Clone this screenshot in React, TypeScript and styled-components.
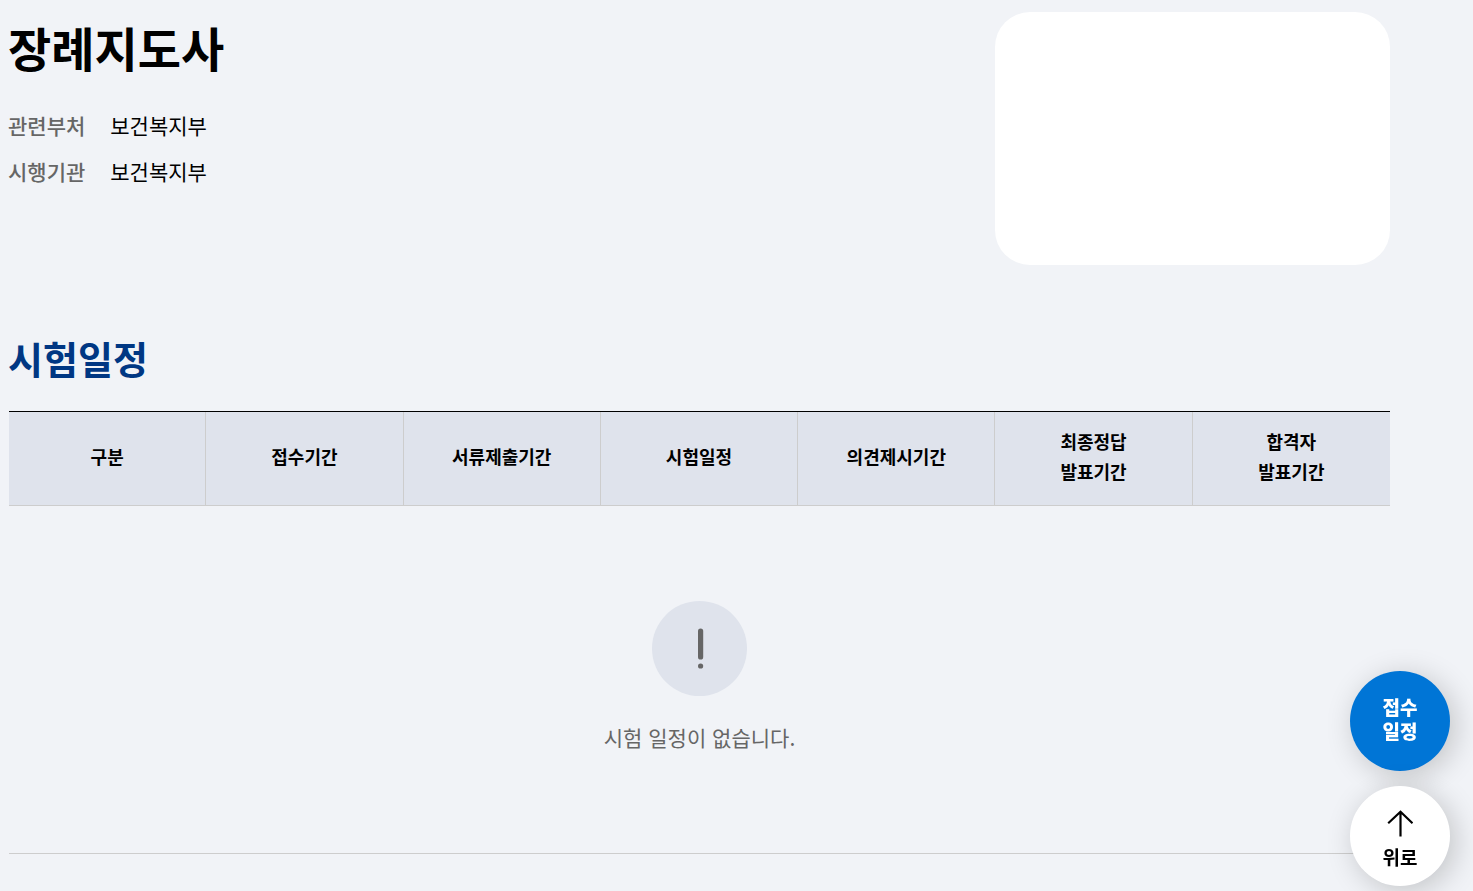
import styled, { createGlobalStyle } from "styled-components";

const color = {
  page: "#f1f3f7",
  head: "#dfe3ec",
  line: "#cdcdcd",
  muted: "#666666",
  navy: "#003783",
  blue: "#0075d6",
};

const GlobalStyle = createGlobalStyle`
  *, *::before, *::after { box-sizing: border-box; }
  body {
    margin: 0;
    background: ${color.page};
    color: #000;
    font-family: "Noto Sans CJK KR", "Noto Sans", sans-serif;
    font-size: 21px;
  }
  h1, h2, p, dl, dt, dd { margin: 0; }
`;

const Page = styled.main`
  padding: 12px 83px 37px 8px;
`;

const Summary = styled.section`
  display: grid;
  grid-template-columns: 5fr 2fr;
  align-items: start;
`;

const Title = styled.h1`
  margin-bottom: 20px;
  font-size: 47px;
  font-weight: 700;
  line-height: 70px;
`;

const InfoList = styled.dl`
  display: grid;
  grid-template-columns: max-content 1fr;
  column-gap: 25px;
  line-height: 46px;
`;

const InfoLabel = styled.dt`
  color: ${color.muted};
  font-weight: 500;
`;

const InfoValue = styled.dd`
  font-weight: 400;
`;

const Card = styled.div`
  min-height: 253px;
  border-radius: 35px;
  background: #fff;
`;

const Schedule = styled.section`
  margin-top: 67px;
`;

const SectionTitle = styled.h2`
  margin-bottom: 27px;
  color: ${color.navy};
  font-size: 38px;
  font-weight: 700;
  line-height: 52px;
`;

const TableWrap = styled.div`
  padding-left: 1px;
`;

const Table = styled.table`
  width: 100%;
  table-layout: fixed;
  border-collapse: separate;
  border-spacing: 0;
  border-top: 1px solid #000;
`;

const HeadCell = styled.th`
  padding: 14px 8px 19px;
  border-right: 1px solid ${color.line};
  border-bottom: 1px solid ${color.line};
  background: ${color.head};
  font-size: 18px;
  font-weight: 700;
  line-height: 30px;
  &:last-child { border-right: 0; }
`;

const EmptyCell = styled.td`
  padding: 95px 0 99px;
  border-bottom: 1px solid ${color.line};
`;

const Empty = styled.div`
  display: flex;
  flex-direction: column;
  align-items: center;
  gap: 24px;
  color: ${color.muted};
  line-height: 34px;
`;

const Notice = styled.svg`
  display: block;
  width: 95px;
  height: 95px;
`;

const Line = styled.span`
  display: block;
`;

const Floating = styled.nav`
  position: fixed;
  right: 23px;
  bottom: 5px;
  display: flex;
  flex-direction: column;
  gap: 15px;
`;

const RoundButton = styled.button<{ $primary?: boolean }>`
  display: flex;
  flex-direction: column;
  align-items: center;
  justify-content: center;
  width: 100px;
  height: 100px;
  padding: ${(p) => (p.$primary ? "0 0 4px" : "6px 0 0")};
  border: 0;
  border-radius: 50%;
  background: ${(p) => (p.$primary ? color.blue : "#fff")};
  color: ${(p) => (p.$primary ? "#fff" : "#000")};
  box-shadow: 5px 5px 30px rgba(0, 0, 0, 0.2);
  font-family: inherit;
  font-size: 19px;
  font-weight: ${(p) => (p.$primary ? 900 : 700)};
  line-height: 24px;
  cursor: pointer;
`;

const ArrowUp = styled.svg`
  display: block;
  width: 26px;
  height: 27px;
  margin-bottom: 8px;
`;

const columns = [
  ["구분"],
  ["접수기간"],
  ["서류제출기간"],
  ["시험일정"],
  ["의견제시기간"],
  ["최종정답", "발표기간"],
  ["합격자", "발표기간"],
];

const Lines = ({ items }: { items: string[] }) => (
  <>
    {items.map((text) => (
      <Line key={text}>{text}</Line>
    ))}
  </>
);

export default function App() {
  return (
    <>
      <GlobalStyle />
      <Page lang="ko">
        <Summary>
          <div>
            <Title>장례지도사</Title>
            <InfoList>
              <InfoLabel>관련부처</InfoLabel>
              <InfoValue>보건복지부</InfoValue>
              <InfoLabel>시행기관</InfoLabel>
              <InfoValue>보건복지부</InfoValue>
            </InfoList>
          </div>
          <Card />
        </Summary>

        <Schedule>
          <SectionTitle>시험일정</SectionTitle>
          <TableWrap>
            <Table>
              <thead>
                <tr>
                  {columns.map((c) => (
                    <HeadCell key={c.join(" ")} scope="col">
                      <Lines items={c} />
                    </HeadCell>
                  ))}
                </tr>
              </thead>
              <tbody>
                <tr>
                  <EmptyCell colSpan={columns.length}>
                    <Empty>
                      <Notice viewBox="0 0 95 95" aria-hidden="true">
                        <circle cx="47.5" cy="47.5" r="47.5" fill={color.head} />
                        <rect x="46" y="27.5" width="5.2" height="31" rx="2.6" fill={color.muted} />
                        <circle cx="48.6" cy="65" r="2.6" fill={color.muted} />
                      </Notice>
                      <p>시험 일정이 없습니다.</p>
                    </Empty>
                  </EmptyCell>
                </tr>
              </tbody>
            </Table>
          </TableWrap>
        </Schedule>
      </Page>

      <Floating>
        <RoundButton type="button" $primary>
          <Lines items={["접수", "일정"]} />
        </RoundButton>
        <RoundButton type="button" onClick={() => window.scrollTo({ top: 0 })}>
          <ArrowUp viewBox="0 0 26 27" fill="none" stroke="#000" strokeWidth="2.2" aria-hidden="true">
            <path d="M13.5 26.5V2M1.2 13.2L13.5 1.8l12 11.4" />
          </ArrowUp>
          <Line>위로</Line>
        </RoundButton>
      </Floating>
    </>
  );
}
